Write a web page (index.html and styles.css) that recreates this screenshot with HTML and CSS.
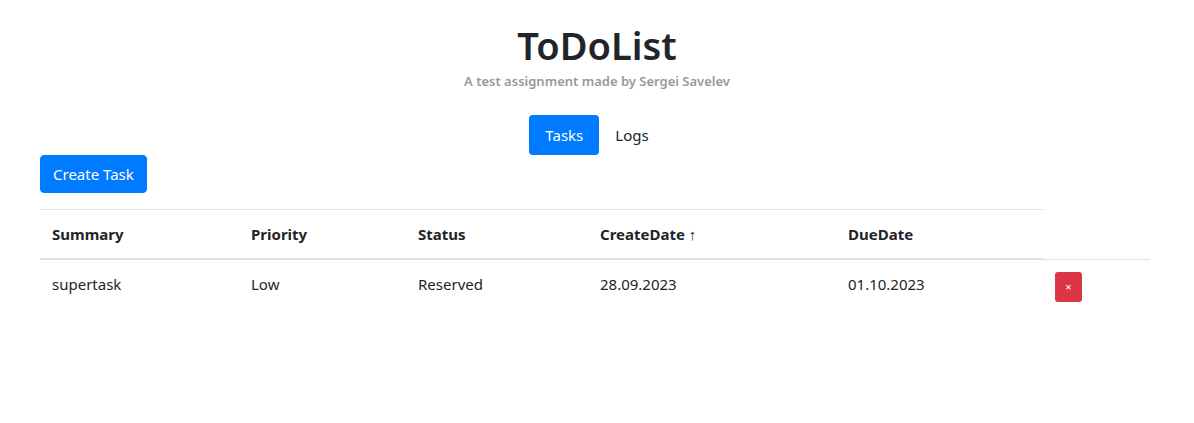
FILE: index.html
```html
<!DOCTYPE html>
<html>
<head>
<meta charset="utf-8">
<link rel="stylesheet" href="styles.css">
</head>
<body>
<div class="app">
  <header class="head">
    <h1 class="title">ToDoList</h1>
    <p class="subtitle">A test assignment made by Sergei Savelev</p>
  </header>
  <nav class="pills">
    <a class="pill active">Tasks</a>
    <a class="pill">Logs</a>
  </nav>
  <div class="toolbar">
    <button class="btn btn-primary">Create Task</button>
  </div>
  <table class="tasks">
    <colgroup>
      <col class="c1"><col class="c2"><col class="c3"><col class="c4"><col class="c5"><col class="c6">
    </colgroup>
    <thead>
      <tr>
        <th>Summary</th>
        <th>Priority</th>
        <th>Status</th>
        <th>CreateDate <span class="arrow">↑</span></th>
        <th>DueDate</th>
      </tr>
    </thead>
    <tbody>
      <tr>
        <td>supertask</td>
        <td>Low</td>
        <td>Reserved</td>
        <td>28.09.2023</td>
        <td>01.10.2023</td>
        <td><button class="btn-del">×</button></td>
      </tr>
    </tbody>
  </table>
</div>
</body>
</html>
```
FILE: styles.css
```css
html, body {
  margin: 0;
  padding: 0;
  background: #fff;
}
body {
  font-family: "Noto Sans", "Open Sans", sans-serif;
  font-size: 15px;
  line-height: 24px;
  color: #212529;
}
.app {
  padding: 0 40px;
}
.head {
  text-align: center;
  padding-top: 22px;
}
.title {
  margin: 0;
  font-size: 38px;
  font-weight: 600;
  line-height: 46px;
}
.subtitle {
  margin: 3px 0 0;
  font-size: 13px;
  font-weight: 600;
  color: #999;
  line-height: 20px;
}
.pills {
  display: flex;
  justify-content: center;
  margin-top: 24px;
}
.pill {
  display: block;
  padding: 8px 16px;
  border-radius: 4px;
  color: #212529;
  line-height: 24px;
}
.pill.active {
  background: #007bff;
  color: #fff;
}
.toolbar {
  display: flex;
}
.btn {
  font-family: inherit;
  font-size: 15px;
  line-height: 24px;
  padding: 6px 12px;
  border: 1px solid transparent;
  border-radius: 4px;
}
.btn-primary {
  background: #007bff;
  border-color: #007bff;
  color: #fff;
}
.tasks {
  margin-top: 16px;
  border-collapse: collapse;
  table-layout: fixed;
  width: 1110px;
}
.c1 { width: 199px; }
.c2 { width: 167px; }
.c3 { width: 182px; }
.c4 { width: 248px; }
.c5 { width: 207px; }
.c6 { width: 107px; }
.tasks th, .tasks td {
  padding: 12px;
  text-align: left;
  vertical-align: top;
  border-top: 1px solid #dee2e6;
}
.tasks th {
  font-weight: 700;
  border-bottom: 2px solid #dee2e6;
}
.arrow {
  font-weight: 400;
}
.btn-del {
  display: block;
  width: 27px;
  height: 30px;
  padding: 0;
  border: none;
  border-radius: 3px;
  background: #dc3545;
  color: #fff;
  font-family: inherit;
  font-size: 11px;
  line-height: 30px;
  text-align: center;
}
```
